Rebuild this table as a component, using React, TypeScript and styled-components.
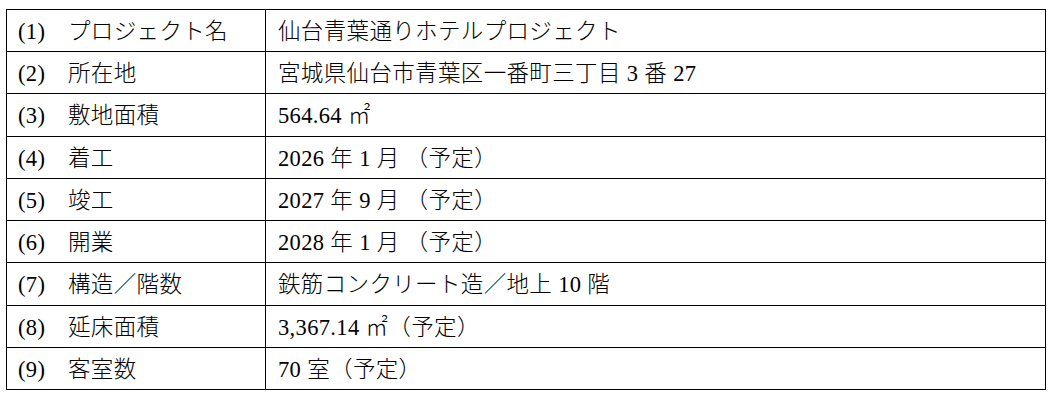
import styled, { createGlobalStyle } from 'styled-components';

const GlobalStyle = createGlobalStyle`
  html, body {
    margin: 0;
    background: #fff;
  }
`;

type Item = { no: number; label: string; value: string };

const ITEMS: Item[] = [
  { no: 1, label: 'プロジェクト名', value: '仙台青葉通りホテルプロジェクト' },
  { no: 2, label: '所在地', value: '宮城県仙台市青葉区一番町三丁目 3 番 27' },
  { no: 3, label: '敷地面積', value: '564.64 ㎡' },
  { no: 4, label: '着工', value: '2026 年 1 月 （予定）' },
  { no: 5, label: '竣工', value: '2027 年 9 月 （予定）' },
  { no: 6, label: '開業', value: '2028 年 1 月 （予定）' },
  { no: 7, label: '構造／階数', value: '鉄筋コンクリート造／地上 10 階' },
  { no: 8, label: '延床面積', value: '3,367.14 ㎡（予定）' },
  { no: 9, label: '客室数', value: '70 室（予定）' },
];

const App = () => {
  return (
    <>
      <GlobalStyle />
      <Page>
        <Table>
          {ITEMS.map((item) => (
            <Row key={item.no}>
              <Cell>
                <Text>
                  <Num>({item.no})</Num>
                  {item.label}
                </Text>
              </Cell>
              <Cell>
                <Text>{item.value}</Text>
              </Cell>
            </Row>
          ))}
        </Table>
      </Page>
    </>
  );
};

export default App;

const Page = styled.div`
  padding: 9px 0 0 6px;
  font-family: 'Liberation Serif', 'Noto Sans CJK JP', serif;
  font-size: 22.5px;
  font-weight: 300;
  letter-spacing: 0.35px;
  color: #000;
`;

const Table = styled.div`
  display: grid;
  grid-template-rows: repeat(9, 1fr);
  width: 1040px;
  height: 381px;
  box-sizing: border-box;
  border-top: 1.5px solid #000;
  border-left: 1.5px solid #000;
`;

const Row = styled.div`
  display: grid;
  grid-template-columns: 259px 1fr;
`;

const Cell = styled.div`
  display: flex;
  align-items: center;
  padding-left: 11px;
  border-right: 1.5px solid #000;
  border-bottom: 1.5px solid #000;
  white-space: nowrap;

  & + & {
    padding-left: 12px;
  }
`;

const Text = styled.span`
  line-height: 1.3;
  padding-top: 2px;
`;

const Num = styled.span`
  display: inline-block;
  width: 50px;
`;
